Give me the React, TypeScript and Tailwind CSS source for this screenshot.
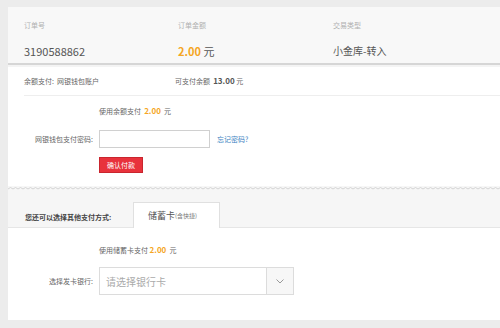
import React from "react";

const font = { fontFamily: '"Noto Sans CJK SC", "Noto Sans", sans-serif' };

function Wave() {
  let p = "M0 3";
  for (let i = 0; i < 100; i++) {
    p += ` q2.5 -3 5 0`;
  }
  return (
    <svg width="492" height="6" viewBox="0 0 492 6" className="block">
      <path d={p} fill="none" stroke="#d4d4d4" strokeWidth="1" />
    </svg>
  );
}

export default function App() {
  return (
    <div className="w-[500px] h-[328px] bg-[#ececec] pt-[7px] pl-[8px] overflow-hidden" style={font}>
      <div className="w-[492px] flex flex-col">
        {/* top summary */}
        <div className="h-[58px] bg-[#f8f8f8] border-b-2 border-[#d6d6d6] px-[16px] grid grid-cols-[154px_155px_150px]">
          <div className="flex flex-col">
            <span className="mt-[13px] h-[10px] text-[7px] leading-[10px] text-[#b0b0b0]">订单号</span>
            <span className="mt-[14px] text-[11px] leading-[14px] text-[#555]">3190588862</span>
          </div>
          <div className="flex flex-col">
            <span className="mt-[13px] h-[10px] text-[7px] leading-[10px] text-[#b0b0b0]">订单金额</span>
            <span className="mt-[14px] text-[11px] leading-[14px] text-[#555]">
              <span className="font-bold text-[#f5a623]">2.00</span> 元
            </span>
          </div>
          <div className="flex flex-col">
            <span className="mt-[13px] h-[10px] text-[7px] leading-[10px] text-[#b0b0b0]">交易类型</span>
            <span className="mt-[14px] text-[10px] leading-[14px] text-[#555]">小金库-转入</span>
          </div>
        </div>
        <div className="bg-white flex flex-col">
          <div className="h-[2px] bg-[#f4f4f4]" />
          {/* balance row */}
          <div className="h-[29px] ml-[16px] border-b border-[#eeeeee] flex items-center text-[7px] text-[#666]">
            <span className="w-[151px]">余额支付:&nbsp;&nbsp;网银钱包账户</span>
            <span>
              可支付余额&nbsp;&nbsp;<span className="font-bold text-[#555] text-[8px]">13.00</span>&nbsp;元
            </span>
          </div>
          <div className="pl-[91px] pt-[10px] text-[7px] leading-[10px] text-[#666]">
            使用余额支付&nbsp;&nbsp;<span className="font-bold text-[#f5a623] text-[8px]">2.00</span>&nbsp;&nbsp;元
          </div>
          <div className="flex items-center mt-[14px] h-[18px]">
            <span className="w-[85px] text-right text-[7px] text-[#666]">网银钱包支付密码:</span>
            <div className="ml-[6px] w-[111px] h-[18px] border border-[#d0d0d0] bg-white" />
            <span className="ml-[7px] text-[7px] text-[#3a7fc1]">忘记密码?</span>
          </div>
          <div className="pl-[91px] mt-[9px]">
            <div className="w-[44px] h-[16px] bg-[#e8323c] border border-[#c9252e] flex items-center justify-center text-[7px] text-white">
              确认付款
            </div>
          </div>
          <div className="h-[13px]" />
        </div>
        <div className="bg-[#f6f6f6]">
          <Wave />
          <div className="h-[36px] flex items-end border-b border-[#e6e6e6] pl-[17px]">
            <span className="self-center mt-[16px] w-[108px] text-[7px] font-bold text-[#444]">您还可以选择其他支付方式:</span>
            <div className="w-[87px] h-[26px] bg-white border border-b-0 border-[#e0e0e0] -mb-px flex items-center pl-[14px] text-[9px] text-[#555]">
              储蓄卡<span className="text-[6px] text-[#777]">(含快捷)</span>
            </div>
          </div>
        </div>
        <div className="bg-white h-[92px] flex flex-col">
          <div className="pl-[91px] pt-[17px] text-[7px] leading-[10px] text-[#666]">
            使用储蓄卡支付&nbsp;<span className="font-bold text-[#f5a623] text-[8px]">2.00</span>&nbsp;&nbsp;元
          </div>
          <div className="flex items-center mt-[12px] h-[28px]">
            <span className="w-[85px] text-right text-[7px] text-[#666]">选择发卡银行:</span>
            <div className="ml-[6px] w-[195px] h-[28px] border border-[#dcdcdc] flex">
              <span className="flex-1 flex items-center pl-[6px] text-[10px] text-[#aaa]">请选择银行卡</span>
              <div className="w-[27px] h-full bg-[#f7f7f7] border-l border-[#dcdcdc] flex items-center justify-center">
                <svg width="8" height="5" viewBox="0 0 8 5">
                  <path d="M0.5 0.5 L4 4 L7.5 0.5" fill="none" stroke="#999" strokeWidth="1" />
                </svg>
              </div>
            </div>
          </div>
        </div>
      </div>
    </div>
  );
}
